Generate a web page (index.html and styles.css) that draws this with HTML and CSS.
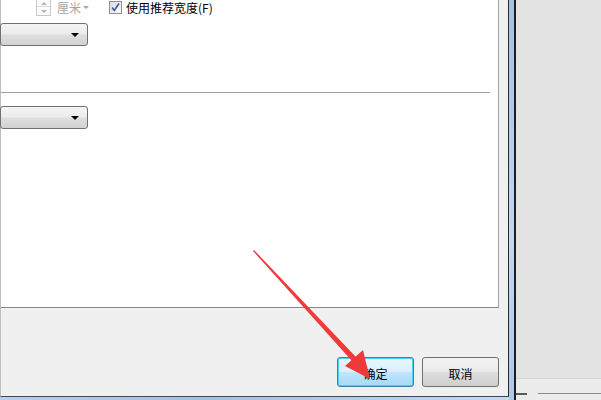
FILE: index.html
```html
<!DOCTYPE html>
<html lang="zh-CN">
<head>
    <meta charset="UTF-8">
    <title>表格属性</title>
    <link rel="stylesheet" href="styles.css">
</head>
<body>
    <div class="window">
        <div class="dialog">
            <div class="panel">
                <div class="size-row">
                    <div class="spin">
                        <span class="spin-up"></span>
                        <span class="spin-down"></span>
                    </div>
                    <span class="unit">厘米<i class="unit-arrow"></i></span>
                    <label class="check">
                        <span class="check-box">
                            <svg width="11" height="11" viewBox="0 0 11 11"><path d="M2 5.5 L4.3 8.5 L9 1.5" fill="none" stroke="#3a57a6" stroke-width="1.6"/></svg>
                        </span>
                        使用推荐宽度(F)
                    </label>
                </div>
                <div class="combo combo-first"><i class="combo-arrow"></i></div>
                <hr class="separator">
                <div class="combo"><i class="combo-arrow"></i></div>
            </div>
            <div class="buttons">
                <button class="btn btn-default">确定</button>
                <button class="btn">取消</button>
            </div>
        </div>
        <div class="frame-bottom"></div>
    </div>
    <div class="frame-side"></div>
    <div class="desk">
        <div class="desk-bar">
            <span class="bar-mark"></span>
            <span class="bar-line"></span>
        </div>
    </div>

    <!-- red annotation arrow drawn over the dialog -->
    <svg class="annotation" width="601" height="400" viewBox="0 0 601 400">
        <polygon points="253,251 254,250 356,357 352,361" fill="#f03a3a"/>
        <polygon points="370,379 345,366 363,350" fill="#f03a3a"/>
    </svg>
</body>
</html>
```

FILE: styles.css
```css
/* Global Styles */
body {
    margin: 0;
    width: 601px;
    height: 400px;
    overflow: hidden;
    display: flex;
    background-color: #e3e3e3;
    font-family: "Noto Sans CJK SC", "Liberation Sans", sans-serif;
    font-size: 12px;
    color: #000;
}

/* Window */
.window {
    display: flex;
    flex-direction: column;
    width: 509px;
}
.dialog {
    height: 396px;
    background-color: #f0f0f0;
    border-left: 1px solid #bdbdbd;
    border-right: 1px solid #2b2b2b;
    border-bottom: 1px solid #3d4a5a;
}
.frame-bottom {
    height: 3px;
    background: linear-gradient(to right, #b9cfe8, #a7c0df 40%, #c4d8ee);
}
.frame-side {
    width: 5px;
    border-right: 2px solid #1e1e1e;
    background: linear-gradient(to bottom, #a6c0e0, #c3d7ee 60%, #b0c9e6);
}

/* Tab panel */
.panel {
    height: 308px;
    width: 497px;
    background-color: #fff;
    border-right: 1px solid #a0a0a0;
    border-bottom: 1px solid #828790;
}
.size-row {
    display: flex;
    align-items: center;
    height: 16px;
    margin-top: -1px;
}
.spin {
    display: flex;
    flex-direction: column;
    width: 13px;
    height: 16px;
    margin-left: 35px;
    border: 1px solid #c9c9c9;
    border-top: none;
    background-color: #fafafa;
}
.spin-up, .spin-down {
    flex: 1;
    position: relative;
}
.spin-down {
    border-top: 1px solid #dadada;
}
.spin-up::after, .spin-down::after {
    content: "";
    position: absolute;
    left: 4px;
    top: 3px;
    border-left: 3px solid transparent;
    border-right: 3px solid transparent;
}
.spin-up::after {
    border-bottom: 3px solid #b5b5b5;
}
.spin-down::after {
    border-top: 3px solid #b5b5b5;
}
.unit {
    display: flex;
    align-items: center;
    margin-left: 6px;
    color: #a6a6a6;
    font-size: 12px;
}
.unit-arrow {
    margin-left: 2px;
    border-left: 3px solid transparent;
    border-right: 3px solid transparent;
    border-top: 3px solid #a6a6a6;
}
.check {
    display: flex;
    align-items: center;
    margin-left: 20px;
    gap: 4px;
}
.check-box {
    display: flex;
    align-items: center;
    justify-content: center;
    width: 11px;
    height: 11px;
    border: 1px solid #8e8f8f;
    background: linear-gradient(to bottom right, #dcdcdc, #fafafa);
}

/* Combo boxes */
.combo {
    position: relative;
    width: 86px;
    height: 21px;
    margin-left: -1px;
    border: 1px solid #707070;
    border-radius: 3px;
    background: linear-gradient(to bottom, #f4f4f4 0%, #ececec 48%, #dfdfdf 52%, #d2d2d2 100%);
}
.combo-first {
    margin-top: 8px;
}
.combo-arrow {
    position: absolute;
    right: 8px;
    top: 9px;
    border-left: 4px solid transparent;
    border-right: 4px solid transparent;
    border-top: 4px solid #000;
}
.separator {
    width: 489px;
    margin: 46px 0 13px 0;
    border: none;
    border-top: 1px solid #a0a0a0;
}

/* Buttons */
.buttons {
    display: flex;
    gap: 8px;
    margin: 49px 0 0 336px;
}
.btn {
    width: 77px;
    height: 30px;
    padding: 3px 0 0 0;
    border: 1px solid #707070;
    border-radius: 3px;
    background: linear-gradient(to bottom, #f2f2f2 0%, #ebebeb 48%, #dddddd 52%, #cfcfcf 100%);
    font-family: "Noto Sans CJK SC", "Liberation Sans", sans-serif;
    font-size: 12px;
    color: #000;
}
.btn-default {
    border-color: #3c7fb1;
    box-shadow: inset 0 0 0 1px #48d0f8;
    background: linear-gradient(to bottom, #eaf6fd 0%, #d9f0fc 48%, #bee6fd 52%, #a7d9f5 100%);
}

/* Desktop behind */
.desk {
    flex: 1;
    display: flex;
    flex-direction: column;
    justify-content: flex-end;
}
.desk-bar {
    height: 21px;
    border-top: 1px solid #d3d3d3;
    background-color: #ececec;
    display: flex;
    align-items: flex-start;
}
.bar-mark {
    width: 11px;
    margin-top: 14px;
    border-top: 2px solid #5a5a5a;
}
.bar-line {
    flex: 1;
    margin: 14px 0 0 11px;
    border-top: 1px solid #8a8a8a;
}

/* Annotation */
.annotation {
    position: absolute;
    left: 0;
    top: 0;
    pointer-events: none;
}
```
